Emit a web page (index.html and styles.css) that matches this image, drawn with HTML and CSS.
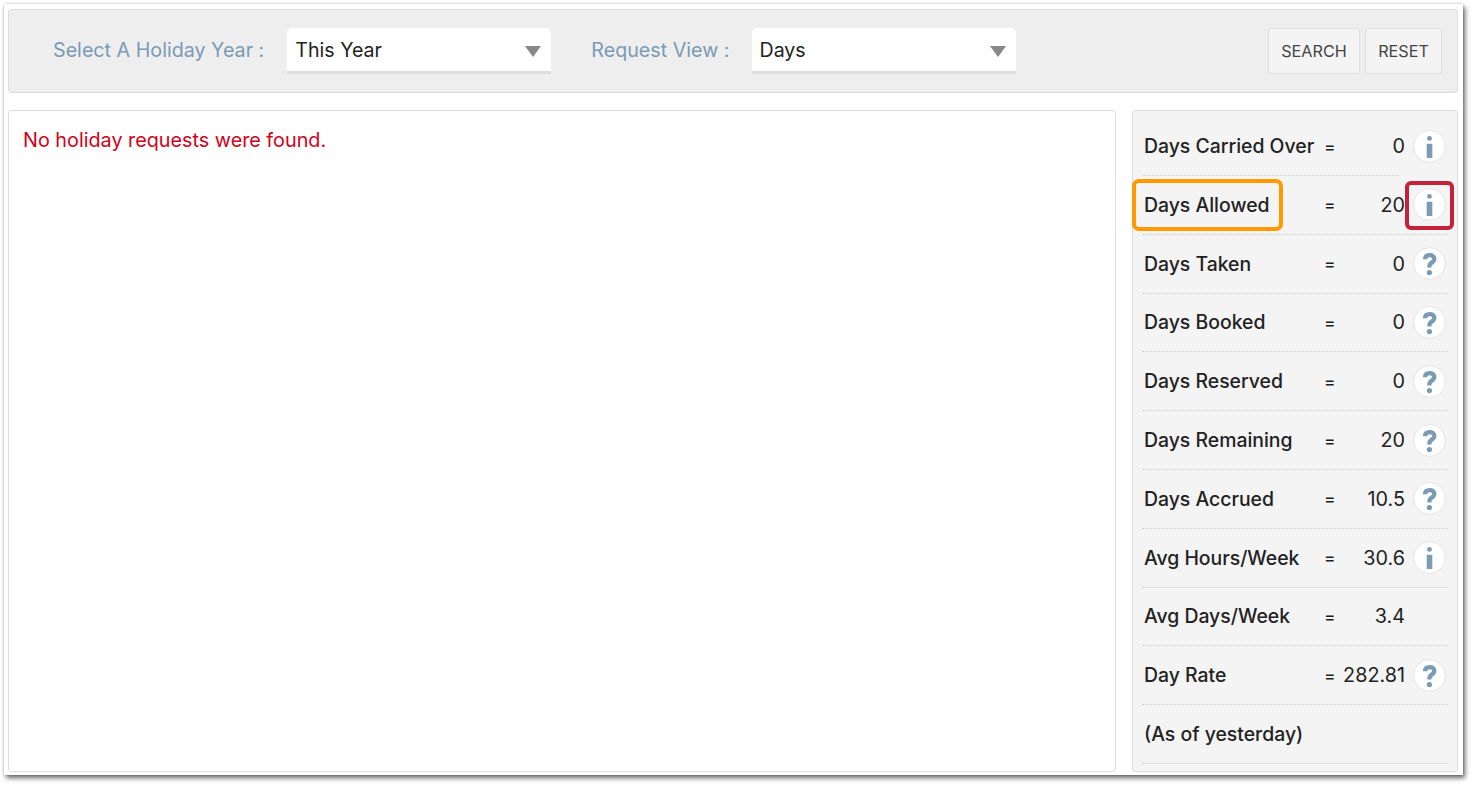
FILE: index.html
```html
<!DOCTYPE html>
<html lang="en">
<head>
<meta charset="utf-8">
<title>Holiday requests</title>
<link rel="stylesheet" href="styles.css">
</head>
<body>
<div class="frame">
  <form class="toolbar">
    <label class="field-label first">Select A Holiday Year :</label>
    <div class="select"><span>This Year</span><i class="arrow"></i></div>
    <label class="field-label second">Request View :</label>
    <div class="select"><span>Days</span><i class="arrow"></i></div>
    <div class="buttons">
      <button type="button" class="btn btn-search">SEARCH</button>
      <button type="button" class="btn btn-reset">RESET</button>
    </div>
  </form>
  <div class="content">
    <main class="results"><p class="empty">No holiday requests were found.</p></main>
    <aside class="summary">
      <div class="row short-line"><span class="name">Days Carried Over</span><span class="eq">=</span><span class="val">0</span><span class="icon"><svg viewBox="0 0 34 34"><use href="#i"/></svg></span></div>
      <div class="row"><span class="name">Days Allowed</span><span class="eq">=</span><span class="val">20</span><span class="icon"><svg viewBox="0 0 34 34"><use href="#i"/></svg></span><b class="mark-orange"></b><b class="mark-red"></b></div>
      <div class="row"><span class="name">Days Taken</span><span class="eq">=</span><span class="val">0</span><span class="icon"><svg viewBox="0 0 34 34"><use href="#q"/></svg></span></div>
      <div class="row"><span class="name">Days Booked</span><span class="eq">=</span><span class="val">0</span><span class="icon"><svg viewBox="0 0 34 34"><use href="#q"/></svg></span></div>
      <div class="row"><span class="name">Days Reserved</span><span class="eq">=</span><span class="val">0</span><span class="icon"><svg viewBox="0 0 34 34"><use href="#q"/></svg></span></div>
      <div class="row"><span class="name">Days Remaining</span><span class="eq">=</span><span class="val">20</span><span class="icon"><svg viewBox="0 0 34 34"><use href="#q"/></svg></span></div>
      <div class="row"><span class="name">Days Accrued</span><span class="eq">=</span><span class="val">10.5</span><span class="icon"><svg viewBox="0 0 34 34"><use href="#q"/></svg></span></div>
      <div class="row"><span class="name">Avg Hours/Week</span><span class="eq">=</span><span class="val">30.6</span><span class="icon"><svg viewBox="0 0 34 34"><use href="#i"/></svg></span></div>
      <div class="row"><span class="name">Avg Days/Week</span><span class="eq">=</span><span class="val">3.4</span><span class="icon none"></span></div>
      <div class="row"><span class="name">Day Rate</span><span class="eq">=</span><span class="val">282.81</span><span class="icon"><svg viewBox="0 0 34 34"><use href="#q"/></svg></span></div>
      <div class="row"><span class="name">(As of yesterday)</span></div>
    </aside>
  </div>
</div>
<svg class="defs" width="0" height="0" aria-hidden="true">
  <symbol id="i" viewBox="0 0 34 34">
    <circle cx="17" cy="17" r="16.4" fill="#fff" stroke="#e2e2e2" stroke-width="1"/>
    <circle cx="17" cy="8.7" r="2.5" fill="#7a9ab5"/>
    <rect x="14.1" y="14.2" width="5.8" height="14.6" fill="#7a9ab5"/>
  </symbol>
  <symbol id="q" viewBox="0 0 34 34">
    <circle cx="17" cy="17" r="16.4" fill="#fff" stroke="#e2e2e2" stroke-width="1"/>
    <path d="M12.400 12.600c0-3 2-4.300 4.800-4.300 2.900 0 4.800 1.500 4.800 3.800 0 2-1.200 3-2.700 4-1.600 1.100-2.400 2-2.400 4.100v.9" fill="none" stroke="#7a9ab5" stroke-width="4.400"/>
    <circle cx="16.900" cy="26.400" r="2.700" fill="#7a9ab5"/>
  </symbol>
</svg>
</body>
</html>
```
FILE: styles.css
```css
html, body {
  margin: 0;
  padding: 0;
  height: 100%;
  background: #fff;
  overflow: hidden;
}
body {
  font-family: Inter, "Liberation Sans", sans-serif;
  color: #222;
}
.defs {
  position: absolute;
}
.frame {
  box-sizing: border-box;
  width: 1459px;
  height: 771px;
  margin: 4px 0 0 4px;
  padding: 5px 5px 3px 4px;
  background: #fff;
  display: flex;
  flex-direction: column;
  box-shadow: 0 0 2px rgba(0,0,0,.25), 2px 3px 5px rgba(0,0,0,.6);
}
.toolbar {
  box-sizing: border-box;
  height: 84px;
  flex: none;
  display: flex;
  align-items: flex-start;
  background: #eee;
  border: 1px solid #ddd;
  border-radius: 3px;
  padding-top: 18px;
}
.field-label {
  width: max-content;
  font-size: 19.7px;
  color: #7a9ab5;
  line-height: 44px;
  white-space: nowrap;
}
.first { margin-left: 44px; margin-right: 23px; }
.second { margin-left: 40px; margin-right: 22px; }
.select {
  box-sizing: border-box;
  width: 264px;
  height: 46px;
  display: flex;
  align-items: flex-start;
  justify-content: space-between;
  background: #fff;
  border-bottom: 3px solid #ddd;
  border-radius: 5px 5px 0 0;
  padding: 0 10px 0 8px;
  font-size: 19.6px;
  line-height: 44px;
  color: #222;
}
.arrow {
  width: 0;
  height: 0;
  margin-top: 18px;
  border-left: 8px solid transparent;
  border-right: 8px solid transparent;
  border-top: 11px solid #888;
}
.buttons {
  margin-left: auto;
  margin-right: 15px;
  display: flex;
  gap: 5px;
}
.btn {
  box-sizing: border-box;
  height: 46px;
  padding: 0;
  background: #f4f4f4;
  border: 1px solid #e0e0e0;
  border-radius: 3px;
  font-family: inherit;
  font-size: 16.2px;
  color: #444;
}
.btn-search { width: 92px; }
.btn-reset { width: 77px; }
.content {
  flex: 1;
  min-height: 0;
  margin-top: 17px;
  display: flex;
  gap: 16px;
}
.results {
  flex: 1;
  box-sizing: border-box;
  background: #fff;
  border: 1px solid #ddd;
  border-radius: 3px;
  padding: 17px 14px;
}
.empty {
  margin: 0;
  font-size: 19.8px;
  line-height: 24px;
  color: #d0021b;
}
.summary {
  box-sizing: border-box;
  width: 326px;
  flex: none;
  background: #f4f4f4;
  border: 1px solid #ddd;
  border-radius: 3px;
  padding: 6.2px 9px 0 9px;
}
.row {
  position: relative;
  box-sizing: border-box;
  height: 58.8px;
  display: flex;
  align-items: center;
  padding-left: 2px;
  border-bottom: 1px dotted #ccc;
}
.short-line {
  border-bottom-color: transparent;
}
.short-line::after {
  content: "";
  position: absolute;
  left: 0;
  right: 49px;
  bottom: -1px;
  border-bottom: 1px dotted #ccc;
}
.name {
  width: 180px;
  flex: none;
  font-size: 19.4px;
  font-weight: 550;
  white-space: nowrap;
  color: #222;
}
.eq {
  width: 13px;
  flex: none;
  font-size: 17.5px;
}
.val {
  width: 68px;
  flex: none;
  text-align: right;
  font-size: 19.8px;
  color: #222;
}
.icon {
  width: 33px;
  height: 33px;
  flex: none;
  margin-left: 8px;
  display: block;
}
.icon svg {
  display: block;
  width: 33px;
  height: 33px;
}
.mark-orange {
  position: absolute;
  left: -10px;
  top: 3px;
  width: 151px;
  height: 52px;
  box-sizing: border-box;
  border: 4px solid #ff9900;
  border-radius: 7px;
}
.mark-red {
  position: absolute;
  left: 263px;
  top: 5px;
  width: 49px;
  height: 49px;
  box-sizing: border-box;
  border: 4px solid #c4213a;
  border-radius: 6px;
}
```
